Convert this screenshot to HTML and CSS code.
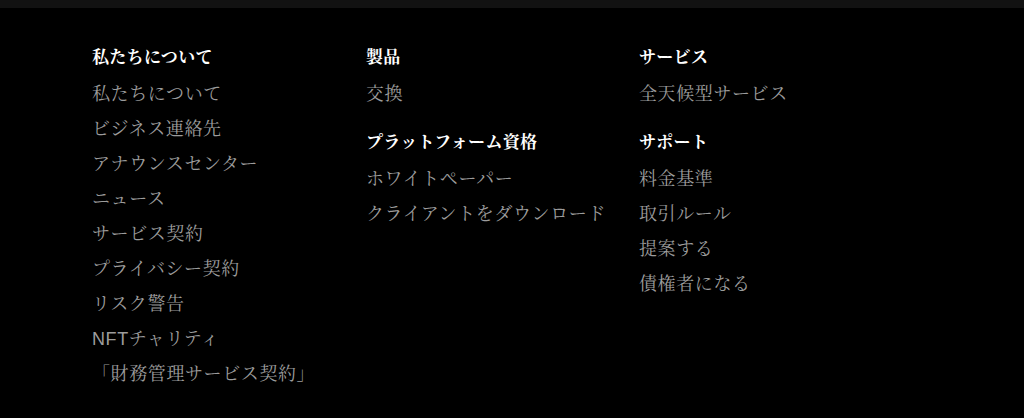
FILE: index.html
```html
<!DOCTYPE html>
<html lang="ja">
<head>
<meta charset="utf-8">
<title>Footer</title>
<link rel="stylesheet" href="styles.css">
</head>
<body>
<div class="topbar"></div>
<footer class="footer">
  <div class="col">
    <section class="group">
      <h3 class="heading">私たちについて</h3>
      <ul class="links">
        <li>私たちについて</li>
        <li>ビジネス連絡先</li>
        <li>アナウンスセンター</li>
        <li>ニュース</li>
        <li>サービス契約</li>
        <li>プライバシー契約</li>
        <li>リスク警告</li>
        <li>NFTチャリティ</li>
        <li>「財務管理サービス契約」</li>
      </ul>
    </section>
  </div>
  <div class="col">
    <section class="group">
      <h3 class="heading">製品</h3>
      <ul class="links">
        <li>交換</li>
      </ul>
    </section>
    <section class="group">
      <h3 class="heading">プラットフォーム資格</h3>
      <ul class="links">
        <li>ホワイトペーパー</li>
        <li>クライアントをダウンロード</li>
      </ul>
    </section>
  </div>
  <div class="col">
    <section class="group">
      <h3 class="heading">サービス</h3>
      <ul class="links">
        <li>全天候型サービス</li>
      </ul>
    </section>
    <section class="group">
      <h3 class="heading">サポート</h3>
      <ul class="links">
        <li>料金基準</li>
        <li>取引ルール</li>
        <li>提案する</li>
        <li>債権者になる</li>
      </ul>
    </section>
  </div>
</footer>
</body>
</html>
```
FILE: styles.css
```css
html, body {
  margin: 0;
  padding: 0;
  background: #000;
}
body {
  font-family: "Liberation Sans", "Noto Serif CJK JP", "Noto Serif CJK SC", serif;
  color: #9c9c9c;
  height: 418px;
  overflow: hidden;
}
.topbar {
  height: 8px;
  background: #121212;
}
.footer {
  display: grid;
  grid-template-columns: 274px 273px 1fr;
  padding: 32px 0 0 92px;
}
.group + .group {
  margin-top: 13px;
}
.heading {
  margin: 0;
  font-size: 17px;
  line-height: 35px;
  letter-spacing: 0.3px;
  font-weight: 700;
  color: #fff;
}
.links {
  list-style: none;
  margin: 2px 0 0;
  padding: 0;
}
.links li {
  font-size: 18px;
  line-height: 35px;
  letter-spacing: 0.6px;
  white-space: nowrap;
}
```
